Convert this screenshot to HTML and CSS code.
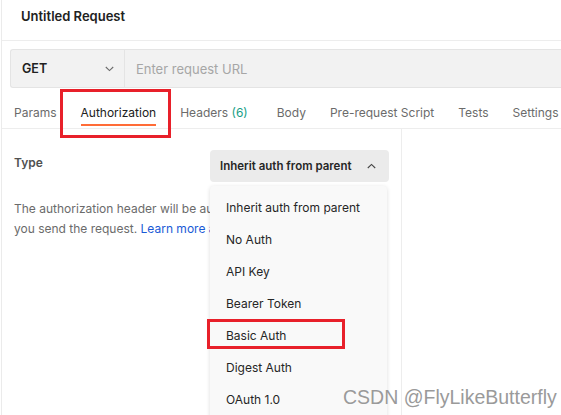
FILE: index.html
```html
<!DOCTYPE html>
<html>
<head>
<meta charset="utf-8">
<link rel="stylesheet" href="styles.css">
</head>
<body>
<div class="app">
  <div class="title-bar">Untitled Request</div>
  <div class="url-row">
    <div class="url-box">
      <div class="method">
        <span class="method-name">GET</span>
        <svg class="chev" width="9" height="6" viewBox="0 0 9 6"><path d="M0.8 1 L4.5 4.6 L8.2 1" fill="none" stroke="#6b6b6b" stroke-width="1.1"/></svg>
      </div>
      <div class="url-input">Enter request URL</div>
    </div>
  </div>
  <div class="tabs">
    <span class="tab">Params</span>
    <span class="tab active">Authorization</span>
    <span class="tab tab-headers">Headers <span class="count">(6)</span></span>
    <span class="tab">Body</span>
    <span class="tab">Pre-request Script</span>
    <span class="tab">Tests</span>
    <span class="tab">Settings</span>
  </div>
  <div class="panes">
    <div class="auth-pane">
      <div class="type-row">
        <span class="type-label">Type</span>
        <div class="select">
          <span class="select-text">Inherit auth from parent</span>
          <svg class="chev-up" width="9" height="6" viewBox="0 0 9 6"><path d="M0.8 5 L4.5 1.4 L8.2 5" fill="none" stroke="#444" stroke-width="1.1"/></svg>
        </div>
      </div>
      <p class="desc">The authorization header will be automatically generated when you send the request. <span class="link">Learn more about authorization</span></p>
      <ul class="menu">
        <li>Inherit auth from parent</li>
        <li>No Auth</li>
        <li>API Key</li>
        <li>Bearer Token</li>
        <li>Basic Auth</li>
        <li>Digest Auth</li>
        <li>OAuth 1.0</li>
      </ul>
    </div>
    <div class="right-pane"></div>
  </div>
</div>
<div class="mark mark-tab"></div>
<div class="mark mark-basic"></div>
<div class="watermark">CSDN @FlyLikeButterfly</div>
</body>
</html>
```
FILE: styles.css
```css
html, body {
  margin: 0;
  padding: 0;
  background: #fff;
  overflow: hidden;
}
body {
  position: relative;
  width: 561px;
  height: 415px;
  font-family: Inter, "Noto Sans", sans-serif;
  color: #212121;
}
.app {
  margin-left: 1px;
  border-left: 1px solid #ebebeb;
  height: 415px;
  display: flex;
  flex-direction: column;
  overflow: hidden;
}
.title-bar {
  height: 32px;
  padding: 8px 0 0 19px;
  font-size: 13px;
  line-height: 16px;
  font-weight: 600;
  border-bottom: 1px solid #ededed;
}
.url-row {
  padding: 8px 0 0 8px;
}
.url-box {
  display: flex;
  height: 37px;
  background: #f2f2f2;
  border: 1px solid #e4e4e4;
  border-right: none;
  border-radius: 3px 0 0 3px;
}
.method {
  width: 114px;
  display: flex;
  align-items: center;
  justify-content: space-between;
  padding: 0 10px 0 11px;
  box-sizing: border-box;
  border-right: 1px solid #e4e4e4;
}
.method-name {
  font-size: 12.5px;
  font-weight: 600;
}
.url-input {
  padding-left: 11px;
  display: flex;
  align-items: center;
  font-size: 13px;
  color: #a6a6a6;
}
.tabs {
  display: flex;
  gap: 24px;
  padding: 16px 0 0 12px;
  height: 24px;
  border-bottom: 1px solid #ededed;
  white-space: nowrap;
}
.tab {
  font-size: 12px;
  line-height: 18px;
  color: #6b6b6b;
  height: 20px;
  border-bottom: 2px solid transparent;
}
.tab-headers {
  margin-right: 5px;
}
.tab.active {
  color: #212121;
  border-bottom-color: #ff6c37;
}
.count {
  color: #17a086;
}
.panes {
  display: flex;
  flex: 1;
}
.auth-pane {
  position: relative;
  width: 375px;
  padding: 21px 12px 0 12px;
  border-right: 1px solid #ededed;
}
.type-row {
  display: flex;
  justify-content: space-between;
  align-items: flex-start;
}
.type-label {
  margin-top: 5px;
  font-size: 12px;
  line-height: 16px;
  font-weight: 600;
  color: #505050;
}
.select {
  width: 179px;
  height: 32px;
  box-sizing: border-box;
  background: #ebebeb;
  border-radius: 4px;
  display: flex;
  align-items: center;
  justify-content: space-between;
  padding: 0 13px 0 10px;
}
.select-text {
  font-size: 11.5px;
  font-weight: 600;
  color: #262626;
}
.desc {
  margin: 17px 0 0;
  font-size: 12px;
  line-height: 20px;
  color: #6b6b6b;
}
.link {
  color: #1a5ad6;
}
.menu {
  position: absolute;
  left: 208px;
  top: 57px;
  width: 177px;
  height: 240px;
  margin: 0;
  padding: 6px 0 0;
  list-style: none;
  background: #f9f9f9;
  border-radius: 4px;
  box-shadow: 0 1px 4px rgba(0,0,0,0.14);
}
.menu li {
  height: 32px;
  line-height: 32px;
  padding-left: 16px;
  font-size: 12px;
  color: #262626;
}
.right-pane {
  flex: 1;
}
.mark {
  position: absolute;
  border: 3px solid #e8202a;
  box-sizing: border-box;
}
.mark-tab {
  left: 60px;
  top: 89px;
  width: 111px;
  height: 49px;
}
.mark-basic {
  left: 207px;
  top: 319px;
  width: 138px;
  height: 30px;
}
.watermark {
  position: absolute;
  left: 343px;
  top: 385px;
  font-family: "Liberation Sans", Arial, sans-serif;
  font-size: 19.5px;
  line-height: 24px;
  color: #9a9a9a;
  text-shadow: 0 0 1px #fff;
  white-space: nowrap;
}
```
